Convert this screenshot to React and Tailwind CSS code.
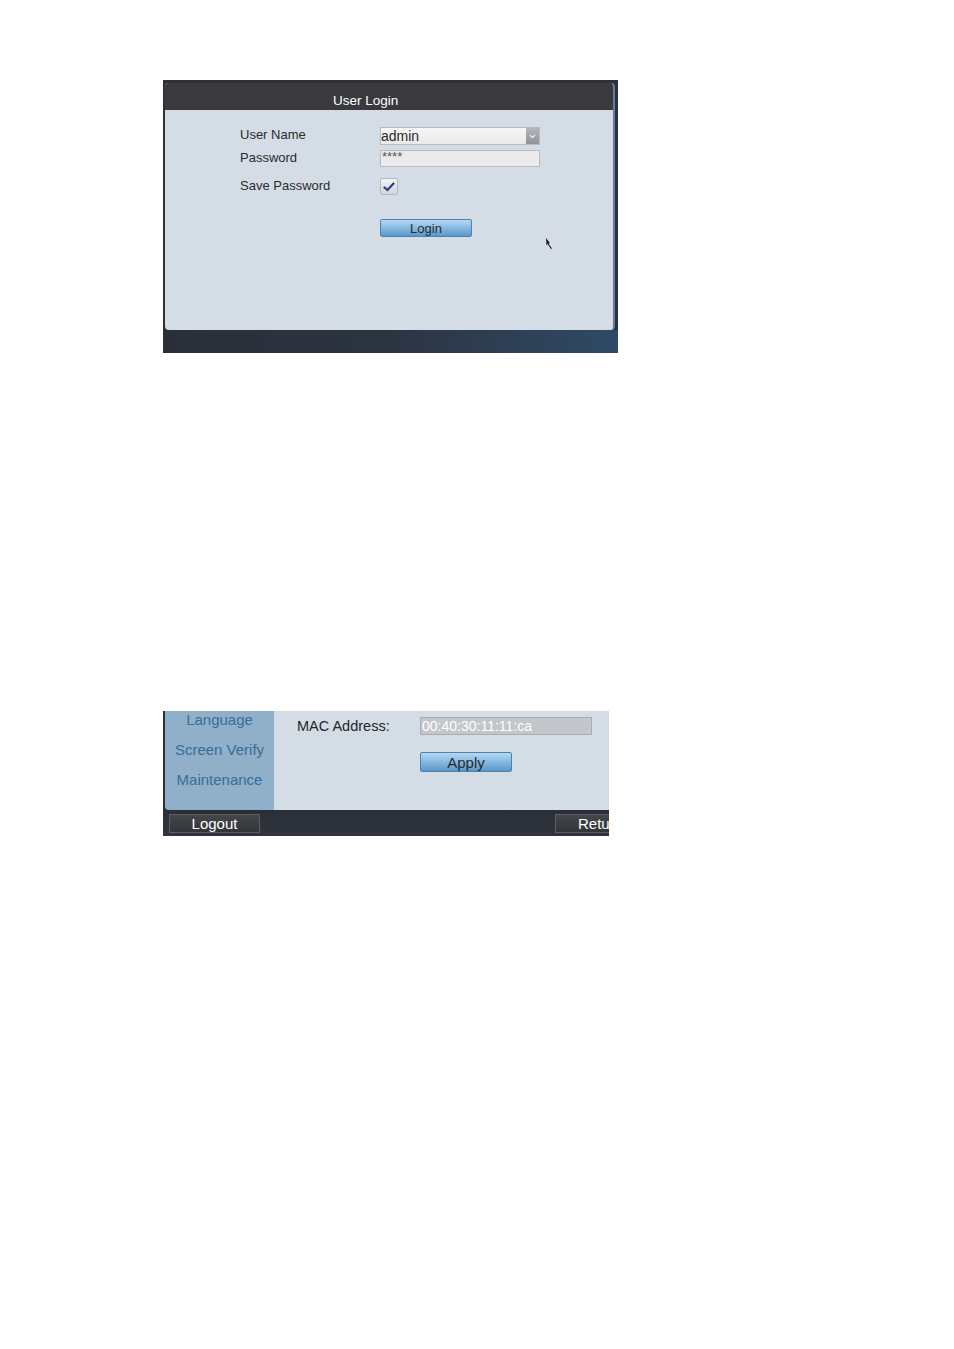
import React from "react";

const font = { fontFamily: '"Liberation Sans", Arial, sans-serif' };

const BlueButton = ({ children, className = "" }) => (
  <div
    className={`flex items-center justify-center rounded-[2px] border border-[#4f81ad] bg-gradient-to-b from-[#b4d8f2] via-[#86b9e0] to-[#5a97cc] text-[#2a2a2a] ${className}`}
  >
    {children}
  </div>
);

const Row = ({ label, className = "", children }) => (
  <div className={`flex items-center ${className}`}>
    <span className="-mt-[3px] w-[140px] leading-none">{label}</span>
    {children}
  </div>
);

const UserLogin = () => (
  <div className="relative flex h-[273px] w-[455px] flex-col bg-[#2b303b]">
    {/* panel */}
    <div className="ml-[2px] mt-[3px] flex h-[247px] w-[450px] flex-col overflow-hidden rounded-[4px] border-r-2 border-[#5d7ea3] bg-[#d4dde5]">
      <div className="flex h-[27px] items-end bg-[#3a393d] pb-[3px] pl-[168px] text-[13.5px] leading-none text-white">
        User Login
      </div>

      <div className="flex flex-col pl-[75px] pt-[17px] text-[13px] text-[#2b2b2b]">
        <Row label="User Name" className="h-[18px]">
          <div className="flex h-[18px] w-[160px] items-center border border-[#b9bcc0] bg-gradient-to-b from-[#f6f6f6] to-[#e9e9e9]">
            <span className="flex-1 text-[14px] leading-none">admin</span>
            <div className="flex h-full w-[13px] items-center justify-center bg-gradient-to-b from-[#b3b6ba] to-[#8f9398]">
              <svg width="7" height="5" viewBox="0 0 7 5">
                <path d="M1 1 L3.5 3.5 L6 1" fill="none" stroke="#f0f0f0" strokeWidth="1.2" />
              </svg>
            </div>
          </div>
        </Row>

        <Row label="Password" className="mt-[5px] h-[17px]">
          <div className="flex h-[17px] w-[160px] items-start overflow-hidden border border-[#b9bcc0] bg-[#ebebeb] pl-[1px] text-[13px] leading-[12px] text-[#555]">
            ****
          </div>
        </Row>

        <Row label="Save Password" className="mt-[11px] h-[17px]">
          <div className="flex h-[17px] w-[18px] items-center justify-center rounded-[2px] border border-[#b5b8bc] bg-gradient-to-b from-[#f4f4f4] to-[#d2d4d7]">
            <svg width="12" height="10" viewBox="0 0 12 10">
              <path d="M1.5 5.5 L4.5 8 L10.5 1.5" fill="none" stroke="#2c3c8c" strokeWidth="2.2" strokeLinecap="round" />
            </svg>
          </div>
        </Row>

        <Row label="" className="mt-[24px] h-[18px]">
          <BlueButton className="h-[18px] w-[92px] text-[13px] leading-none">Login</BlueButton>
        </Row>
      </div>

      {/* mouse pointer */}
      <svg className="absolute left-[382px] top-[157px]" width="9" height="13" viewBox="0 0 9 13">
        <path d="M1 1 L5 6 L3.5 6.5 L7 11.5 L6 12 L2.5 7 L1.5 8.5 Z" fill="#1e1e1e" />
      </svg>
    </div>

    <div className="flex-1 bg-gradient-to-r from-[#2a2e38] via-[#2c3442] to-[#2f4a66]" />
  </div>
);

const SideItem = ({ children }) => (
  <div className="flex h-[30px] items-center justify-center text-[15px] text-[#3a6c9c]">{children}</div>
);

const Maintenance = () => (
  <div className="flex h-[125px] w-[446px] flex-col bg-[#2b303b]">
    <div className="ml-[2px] flex h-[99px] overflow-hidden rounded-bl-[4px]">
      <div className="-mt-[6px] flex w-[109px] flex-col bg-[#8fb0c8]">
        <SideItem>Language</SideItem>
        <SideItem>Screen Verify</SideItem>
        <SideItem>Maintenance</SideItem>
      </div>
      <div className="flex flex-1 flex-col bg-[#d4dde5] pl-[23px] pt-[6px]">
        <div className="flex h-[18px] items-center">
          <span className="w-[123px] text-[14.5px] leading-none text-[#262626]">MAC Address:</span>
          <div className="flex h-[18px] w-[172px] items-center border border-[#a9adb2] bg-[#c3c7cb] pl-[1px] text-[14px] leading-none text-white">
            00:40:30:11:11:ca
          </div>
        </div>
        <BlueButton className="ml-[123px] mt-[17px] h-[20px] w-[92px] text-[15px] leading-none">Apply</BlueButton>
      </div>
    </div>
    <div className="flex flex-1 items-center justify-between bg-gradient-to-b from-[#2a2e37] to-[#30343e] pl-[6px]">
      <div className="flex h-[19px] w-[91px] items-center justify-center border border-[#5a5d63] bg-gradient-to-b from-[#45464b] to-[#333438] text-[15px] leading-none text-white">
        Logout
      </div>
      <div className="flex h-[19px] w-[54px] items-center border border-r-0 border-[#5a5d63] bg-gradient-to-b from-[#45464b] to-[#333438] pl-[22px] text-[15px] leading-none text-white">
        Retu
      </div>
    </div>
  </div>
);

export default function App() {
  return (
    <div className="min-h-[1349px] w-[954px] bg-white pl-[163px] pt-[80px]" style={font}>
      <UserLogin />
      <div className="mt-[358px]">
        <Maintenance />
      </div>
    </div>
  );
}
